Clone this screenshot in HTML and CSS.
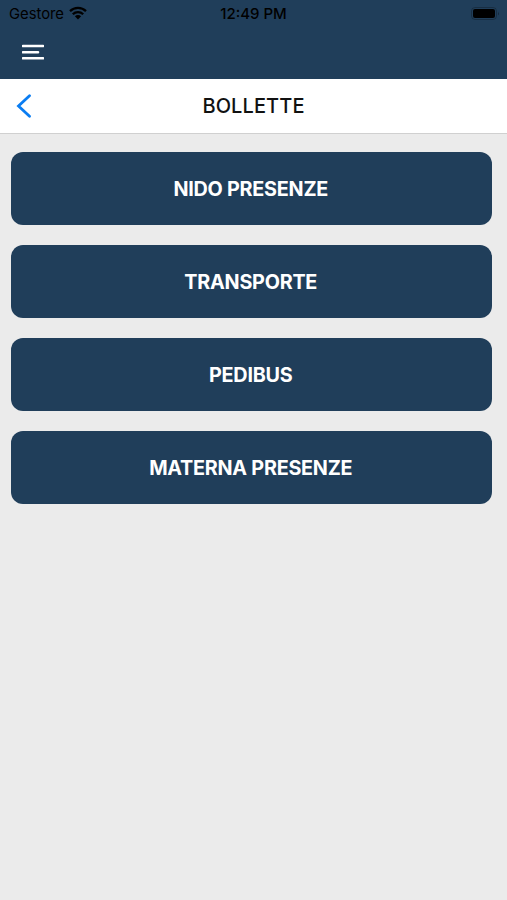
FILE: index.html
```html
<!DOCTYPE html>
<html lang="it">
<head>
    <meta charset="UTF-8">
    <meta name="viewport" content="width=device-width, initial-scale=1.0">
    <title>Bollette</title>
    <link rel="stylesheet" href="styles.css">
</head>
<body>
    <header class="top">
        <div class="status-bar">
            <div class="carrier">
                <span>Gestore</span>
                <svg class="wifi" width="18" height="14" viewBox="0 0 18 14">
                    <path d="M1 5.200a11.500 11.500 0 0 1 16 0M3.800 8.200a7.400 7.400 0 0 1 10.400 0" fill="none" stroke="#000" stroke-width="2.300"/>
                    <path d="M9 13.400L5.900 10.300a4.400 4.400 0 0 1 6.200 0z"/>
                </svg>
            </div>
            <div class="time">12:49 PM</div>
            <svg class="battery" width="29" height="13" viewBox="0 0 29 13">
                <rect x="0.5" y="0.5" width="25" height="12" rx="3.5" fill="none" stroke="#000" stroke-opacity="0.25"/>
                <rect x="2" y="2" width="22" height="9" rx="2"/>
                <path d="M27 4.500q1.500 2 0 4z" fill-opacity="0.4"/>
            </svg>
        </div>
        <button class="menu" aria-label="Menu">
            <svg width="22" height="16" viewBox="0 0 22 16">
                <path d="M1 2h20M1 8.200h15M1 14.300h20" stroke="#fff" stroke-width="2.600" stroke-linecap="round"/>
            </svg>
        </button>
    </header>

    <div class="title-bar">
        <svg class="back" width="16" height="24" viewBox="0 0 16 24">
            <path d="M13.500 1.800L2.500 12l11 10.200" fill="none" stroke="#0a7df2" stroke-width="2.800" stroke-linecap="round"/>
        </svg>
        <h1>BOLLETTE</h1>
    </div>

    <main class="list">
        <button class="item">NIDO PRESENZE</button>
        <button class="item">TRANSPORTE</button>
        <button class="item">PEDIBUS</button>
        <button class="item">MATERNA PRESENZE</button>
    </main>
</body>
</html>
```
FILE: styles.css
```css
* {
    box-sizing: border-box;
    font-family: Inter, sans-serif;
}
body {
    margin: 0;
    min-height: 900px;
    background-color: #ebebeb;
}
.top {
    height: 79px;
    background-color: #203e5a;
}
.status-bar {
    display: grid;
    grid-template-columns: 1fr auto 1fr;
    align-items: center;
    height: 27px;
    padding: 0 7px 0 9px;
    font-size: 14.8px;
    color: #000;
}
.carrier {
    display: flex;
    align-items: center;
    gap: 5px;
}
.wifi {
    margin-top: -2px;
}
.time {
    margin-right: 2px;
    font-size: 15px;
    font-weight: 500;
}
.battery {
    justify-self: end;
}
.menu {
    display: flex;
    margin: 17px 0 0 22px;
    padding: 0;
    border: none;
    background: none;
}
.title-bar {
    display: grid;
    grid-template-columns: 1fr auto 1fr;
    align-items: center;
    height: 55px;
    padding: 0 16px;
    background-color: #fff;
    border-bottom: 1px solid #d0d0d0;
}
h1 {
    margin: 0;
    font-size: 20px;
    font-weight: 500;
    letter-spacing: 0.1px;
    color: #111;
}
.list {
    display: flex;
    flex-direction: column;
    gap: 20px;
    padding: 18.4px 15.5px 0 11px;
}
.item {
    height: 73px;
    padding: 1px 1px 0 0;
    border: none;
    border-radius: 12px;
    background-color: #203e5a;
    color: #fff;
    font-size: 19.8px;
    font-weight: 700;
    letter-spacing: -0.25px;
}
```
